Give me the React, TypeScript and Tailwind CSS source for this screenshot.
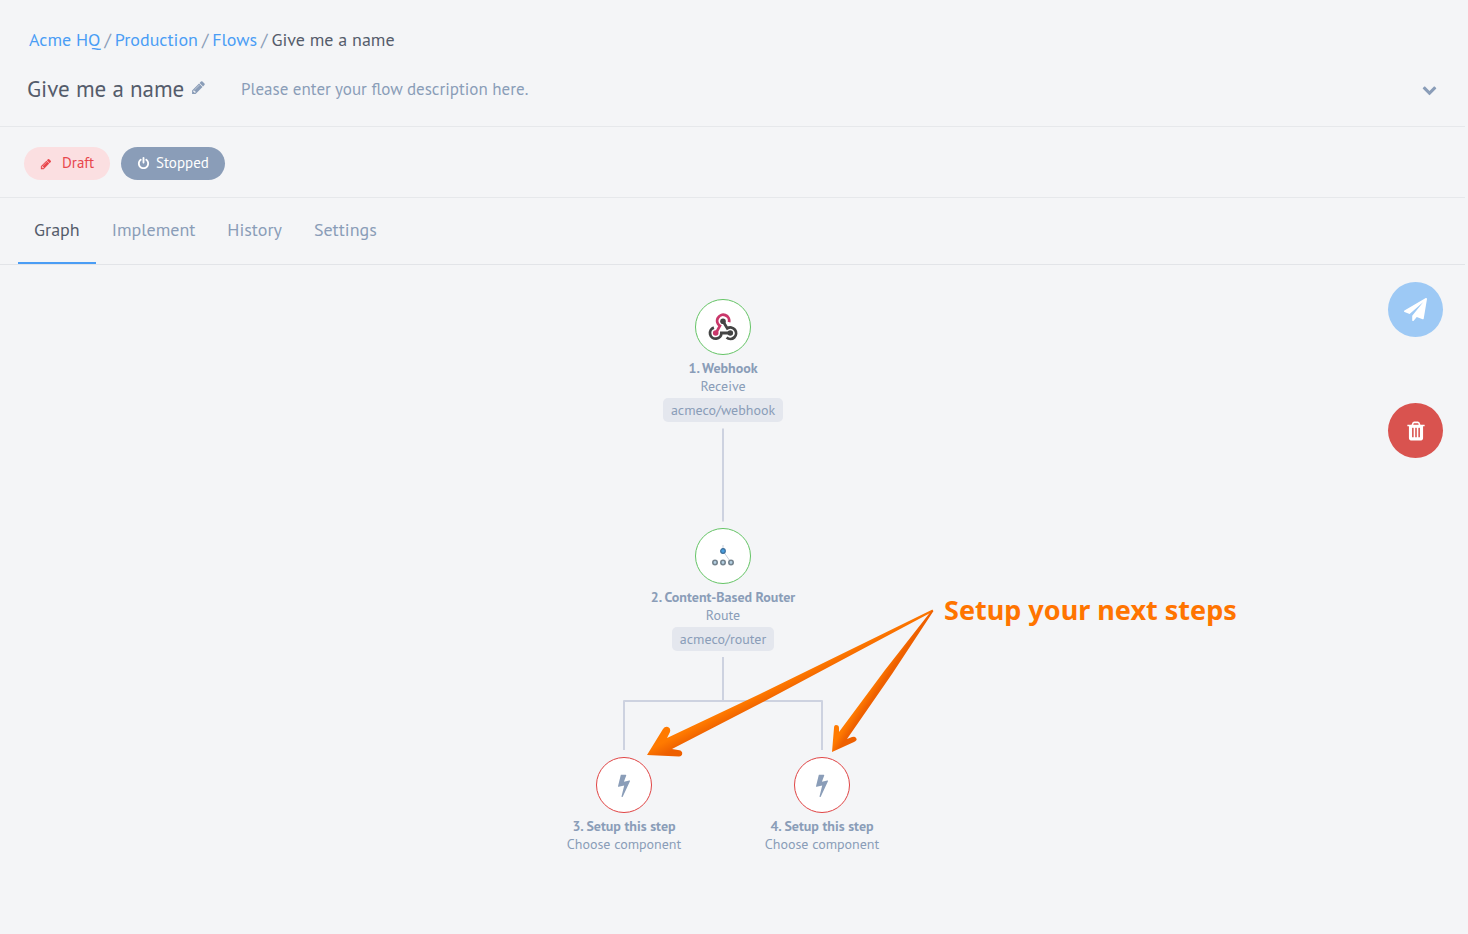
import { useState } from "react";
import type { ReactNode } from "react";

const GLYPHS = {
  pencil:
    "M491 1536l91-91-235-235-91 91v107h128v128h107zm523-928q0-22-22-22-10 0-17 7l-542 542q-7 7-7 17 0 22 22 22 10 0 17-7l542-542q7-7 7-17zm-54-192l416 416-832 832h-416v-416zm683 96q0 53-37 90l-166 166-416-416 166-165q36-38 90-38 53 0 91 38l235 234q37 39 37 91z",
  bolt: "M1333 566q18 20 7 44l-540 1157q-13 25-42 25-4 0-14-2-17-5-25.5-19t-4.5-30l197-808-406 101q-4 1-12 1-18 0-31-11-18-15-13-39l201-825q4-14 16-23t28-9h328q19 0 32 12.5t13 29.5q0 8-5 18l-171 463 396-98q8-2 12-2 19 0 34 15z",
  plane:
    "M1764 11q33 24 27 64l-256 1536q-5 29-32 45-14 8-31 8-11 0-24-5l-453-185-242 295q-18 23-49 23-13 0-22-4-19-7-30.5-23.5t-11.5-36.5v-349l864-1059-1069 925-395-162q-37-14-40-55-2-40 32-59l1664-960q15-9 32-9 20 0 36 11z",
  power:
    "M1664 896q0 156-61 298t-164 245-245 164-298 61-298-61-245-164-164-245-61-298q0-182 80.5-343t226.5-270q43-32 95.5-25t83.5 50q32 42 24.5 94.5t-49.5 84.5q-98 74-151.5 181t-53.5 228q0 104 40.5 198.5t109.5 163.5 163.5 109.5 198.5 40.5 198.5-40.5 163.5-109.5 109.5-163.5 40.5-198.5q0-121-53.5-228t-151.5-181q-42-32-49.5-84.5t24.5-94.5q31-43 84-50t95 25q146 109 226.5 270t80.5 343zm-640-768v640q0 52-38 90t-90 38-90-38-38-90v-640q0-52 38-90t90-38 90 38 38 90z",
  trash:
    "M704 1376v-704q0-14-9-23t-23-9h-64q-14 0-23 9t-9 23v704q0 14 9 23t23 9h64q14 0 23-9t9-23zm256 0v-704q0-14-9-23t-23-9h-64q-14 0-23 9t-9 23v704q0 14 9 23t23 9h64q14 0 23-9t9-23zm256 0v-704q0-14-9-23t-23-9h-64q-14 0-23 9t-9 23v704q0 14 9 23t23 9h64q14 0 23-9t9-23zm-544-992h448l-48-117q-7-9-17-11h-317q-10 2-17 11zm928 32v64q0 14-9 23t-23 9h-96v948q0 83-47 143.5t-113 60.5h-832q-66 0-113-58.5t-47-141.5v-952h-96q-14 0-23-9t-9-23v-64q0-14 9-23t23-9h309l70-167q15-37 54-63t79-26h320q40 0 79 26t54 63l70 167h309q14 0 23 9t9 23z",
  chevron:
    "M1683 808l-742 741q-19 19-45 19t-45-19l-742-741q-19-19-19-45.5t19-45.5l166-165q19-19 45-19t45 19l531 531 531-531q19-19 45-19t45 19l166 165q19 19 19 45.5t-19 45.5z",
};

function Glyph({ name, className }: { name: keyof typeof GLYPHS; className: string }) {
  return (
    <svg viewBox="0 0 1792 1792" className={className} fill="currentColor" aria-hidden="true">
      <path d={GLYPHS[name]} />
    </svg>
  );
}

function WebhookLogo() {
  return (
    <svg viewBox="0 0 30 28" className="h-7 w-[30px]" fill="none" strokeWidth="2.8" aria-hidden="true">
      <path d="M21 9.2A6 6 0 1 0 11.9 12.8L8.2 19.6" stroke="#c9376a" />
      <circle cx="7.7" cy="20" r="2.8" fill="#c9376a" />
      <path d="M5.9 14.6A5.7 5.7 0 1 0 13.4 20H22" stroke="#444444" />
      <circle cx="22.3" cy="20" r="2.8" fill="#444444" />
      <path d="M15 8.2L19.3 15.4A5.7 5.7 0 1 1 18.6 24.5" stroke="#444444" />
      <circle cx="15" cy="8.2" r="2.8" fill="#444444" />
    </svg>
  );
}

function RouterLogo() {
  return (
    <svg viewBox="0 0 26 26" className="size-[26px]" aria-hidden="true">
      <path d="M13 2v6M13 8l7 10" stroke="#c9ced8" strokeWidth="1" />
      <circle cx="13" cy="8" r="2.3" fill="#4a9fe0" stroke="#3a6d9a" strokeWidth="1.2" />
      <g fill="#b4d0e2" stroke="#75848f" strokeWidth="1.6">
        <circle cx="5" cy="19.5" r="2.2" />
        <circle cx="13" cy="19.5" r="2.2" />
        <circle cx="21" cy="19.5" r="2.2" />
      </g>
    </svg>
  );
}

type StepProps = {
  place: string;
  ring: string;
  icon: ReactNode;
  title: string;
  action: string;
  repo?: string;
};

function Step({ place, ring, icon, title, action, repo }: StepProps) {
  return (
    <div className={`absolute flex w-50 -translate-x-1/2 flex-col items-center text-sm leading-[18px] ${place}`}>
      <button
        type="button"
        aria-label={title}
        className={`mb-1 flex size-14 items-center justify-center rounded-full border bg-white ${ring}`}
      >
        {icon}
      </button>
      <strong className="font-bold">{title}</strong>
      <span>{action}</span>
      {repo && <span className="mt-[3px] rounded-[5px] bg-[#e4e7ee] px-2 py-[3px]">{repo}</span>}
    </div>
  );
}

const TABS = ["Graph", "Implement", "History", "Settings"];

export default function App() {
  const [tab, setTab] = useState("Graph");

  return (
    <div className="min-h-screen bg-[#f4f5f7] pr-[3px] font-['PT_Sans','Noto_Sans',sans-serif] text-[#8a9db8]">
      <header className="border-b border-[#e6e8eb] pb-5">
        <nav aria-label="Breadcrumb" className="flex gap-1 px-[29px] pt-7 text-lg leading-6">
          <a href="#acme" className="text-[#4a9df5]">Acme HQ</a>
          <span>/</span>
          <a href="#production" className="text-[#4a9df5]">Production</a>
          <span>/</span>
          <a href="#flows" className="text-[#4a9df5]">Flows</a>
          <span>/</span>
          <span className="text-[#545c6b]">Give me a name</span>
        </nav>
        <div className="mt-5 flex items-center pr-7 pl-[27px]">
          <h1 className="w-40 text-[23px] leading-[34px] whitespace-nowrap text-[#545c6b]">Give me a name</h1>
          <button type="button" aria-label="Edit name" className="mb-1 ml-1">
            <Glyph name="pencil" className="size-[15px]" />
          </button>
          <p className="ml-[35px] text-[17px] leading-6">Please enter your flow description here.</p>
          <button type="button" aria-label="Show details" className="ml-auto">
            <Glyph name="chevron" className="size-[15px]" />
          </button>
        </div>
      </header>

      <div className="flex gap-[11px] border-b border-[#e6e8eb] pt-5 pb-[17px] pl-6 text-[15px]">
        <span className="flex h-[33px] items-center gap-2.5 rounded-full bg-[#fbdfe1] px-4 text-[#e8474c]">
          <Glyph name="pencil" className="size-3" />
          Draft
        </span>
        <span className="flex h-[33px] items-center gap-1.5 rounded-full bg-[#8a9db8] px-4 text-white">
          <Glyph name="power" className="size-[13px]" />
          Stopped
        </span>
      </div>

      <nav aria-label="Flow" className="flex border-b border-[#e2e4e8] pl-[18px]">
        {TABS.map((name) => (
          <button
            key={name}
            type="button"
            onClick={() => setTab(name)}
            className={`h-[66px] border-b-2 px-4 text-lg ${
              tab === name ? "border-[#4a9df5] text-[#545c6b]" : "border-transparent"
            }`}
          >
            {name}
          </button>
        ))}
      </nav>

      <main className="relative h-[640px]">
        <svg width="940" height="500" className="absolute top-0 left-0" fill="none" aria-hidden="true">
          <path
            d="M723 163.5V256.5M723 392V436M624 485V436H822V485"
            stroke="#cdd2e0"
            strokeWidth="2"
            strokeLinejoin="round"
          />
        </svg>

        <Step
          place="top-[34px] left-[723px]"
          ring="border-[#65c466]"
          icon={<WebhookLogo />}
          title="1. Webhook"
          action="Receive"
          repo="acmeco/webhook"
        />
        <Step
          place="top-[263px] left-[723px]"
          ring="border-[#65c466]"
          icon={<RouterLogo />}
          title="2. Content-Based Router"
          action="Route"
          repo="acmeco/router"
        />
        <Step
          place="top-[492px] left-[624px]"
          ring="border-[#e04545]"
          icon={<Glyph name="bolt" className="size-6" />}
          title="3. Setup this step"
          action="Choose component"
        />
        <Step
          place="top-[492px] left-[822px]"
          ring="border-[#e04545]"
          icon={<Glyph name="bolt" className="size-6" />}
          title="4. Setup this step"
          action="Choose component"
        />

        <svg width="940" height="500" className="pointer-events-none absolute top-0 left-0" aria-hidden="true">
          <defs>
            <linearGradient id="longArrow" gradientUnits="userSpaceOnUse" x1="724" y1="447" x2="729" y2="457">
              <stop offset="0" stopColor="#ff7a00" />
              <stop offset="1" stopColor="#ee6000" />
            </linearGradient>
            <linearGradient id="shortArrow" gradientUnits="userSpaceOnUse" x1="848" y1="457" x2="854" y2="461">
              <stop offset="0" stopColor="#ff7a00" />
              <stop offset="1" stopColor="#ee6000" />
            </linearGradient>
          </defs>
          <path
            d="M932.5 344.5L760 429L667 473L670 467Q671 463 668 462Q665 461 663 464L647 490L679 491.5Q683 491 682 487Q681 485 678 485L672 484L765 436L933 346.5Z"
            fill="url(#longArrow)"
          />
          <path
            d="M932 345L885 405L839 467V463Q839 460 836 460Q834 460 834 463L832 487L854 477Q858 475 856 473Q855 471 852 472L847 474L892 409L933.5 346Z"
            fill="url(#shortArrow)"
          />
        </svg>
        <p className="absolute top-[325px] left-[944px] font-['Noto_Sans',sans-serif] text-[27px] leading-10 font-bold whitespace-nowrap text-[#ff7400]">
          Setup your next steps
        </p>

        <div className="absolute top-[17px] right-[22px] flex flex-col gap-[66px] text-white">
          <button
            type="button"
            aria-label="Publish"
            className="flex size-[55px] items-center justify-center rounded-full bg-[#9dc9f5]"
          >
            <Glyph name="plane" className="size-[23px]" />
          </button>
          <button
            type="button"
            aria-label="Delete"
            className="flex size-[55px] items-center justify-center rounded-full bg-[#d9534f]"
          >
            <Glyph name="trash" className="size-[22px]" />
          </button>
        </div>
      </main>
    </div>
  );
}
